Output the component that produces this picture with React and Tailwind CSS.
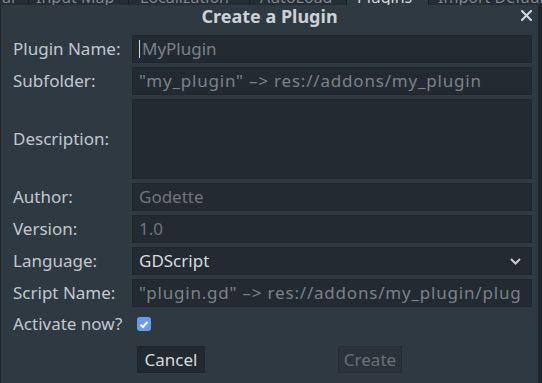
import React from "react";

function Tab({ className, textClass = "text-[#7f878f]", children }) {
  return (
    <div className={"h-[5px] overflow-hidden shrink-0 " + className}>
      <div className={"-mt-[13px] leading-[20px] whitespace-nowrap " + textClass}>{children}</div>
    </div>
  );
}

function Label({ children }) {
  return <div className="text-[17px] leading-[22px] text-[#c3c8cd] whitespace-nowrap">{children}</div>;
}

function Field({ children, className = "" }) {
  return (
    <div
      className={
        "h-[28px] bg-[#232a31] border border-[#20262c] flex items-center pl-[6px] pr-[10px] text-[17px] leading-[22px] whitespace-nowrap " +
        className
      }
    >
      {children}
    </div>
  );
}

export default function App() {
  return (
    <div className="w-[542px] h-[383px] overflow-hidden bg-[#20262c] flex flex-col font-['Noto_Sans',sans-serif]">
      {/* editor tabs behind the dialog */}
      <div className="h-[5px] flex bg-[#252c33] text-[16px]">
        <Tab className="w-[28px] pl-[2px]">al</Tab>
        <div className="w-[1px] h-[5px] bg-[#1b2026] shrink-0" />
        <Tab className="w-[99px] pl-[7px]">Input Map</Tab>
        <div className="w-[1px] h-[5px] bg-[#1b2026] shrink-0" />
        <Tab className="w-[120px] pl-[11px]">Localization</Tab>
        <div className="w-[1px] h-[5px] bg-[#1b2026] shrink-0" />
        <Tab className="w-[96px] pl-[10px]">AutoLoad</Tab>
        <div className="w-[1px] h-[5px] bg-[#1b2026] shrink-0" />
        <Tab className="w-[81px] pl-[10px] bg-[#2f3942]" textClass="text-[#d6dadf]">Plugins</Tab>
        <div className="w-[1px] h-[5px] bg-[#1b2026] shrink-0" />
        <Tab className="flex-1 pl-[9px]">Import Defaults</Tab>
      </div>

      {/* dialog */}
      <div className="ml-[1px] w-[537px] flex-1 bg-[#2f3942] flex flex-col">
        <div className="h-[30px] grid grid-cols-[1fr_auto_1fr]">
          <div />
          <div className="text-[18px] leading-[22px] font-bold text-[#cdd1d6] whitespace-nowrap">Create a Plugin</div>
          <div className="flex justify-end pr-[6px] pt-[5px]">
            <svg width="11" height="11" viewBox="0 0 11 11" className="block">
              <path d="M1 1 L10 10 M10 1 L1 10" stroke="#d5d9dd" strokeWidth="2" strokeLinecap="square" fill="none" />
            </svg>
          </div>
        </div>

        <div className="grid grid-cols-[119px_400px] gap-y-[4px] pl-[12px] items-center">
          <Label>Plugin Name:</Label>
          <Field className="border-[#41eb9b] pl-[1px]">
            <div className="w-[1px] h-[18px] bg-[#d5d9dd] mr-[2px]" />
            <span className="text-[#7b8289]">MyPlugin</span>
          </Field>

          <Label>Subfolder:</Label>
          <Field>
            <span className="text-[#7b8289] tracking-[0.8px]">"my_plugin" –&gt; res://addons/my_plugin</span>
          </Field>

          <Label>Description:</Label>
          <div className="h-[80px] bg-[#232a31] border border-[#20262c]" />

          <Label>Author:</Label>
          <Field>
            <span className="text-[#6f767d]">Godette</span>
          </Field>

          <Label>Version:</Label>
          <Field>
            <span className="text-[#6f767d]">1.0</span>
          </Field>

          <Label>Language:</Label>
          <Field className="justify-between pr-[4px]">
            <span className="text-[#d6dadf]">GDScript</span>
            <svg width="11" height="7" viewBox="0 0 11 7" className="block">
              <path d="M1 1 L5.5 5.5 L10 1" stroke="#c8cdd2" strokeWidth="2" fill="none" />
            </svg>
          </Field>

          <Label>Script Name:</Label>
          <Field>
            <div className="overflow-hidden w-full">
              <span className="text-[#7b8289] tracking-[0.8px]">"plugin.gd" –&gt; res://addons/my_plugin/plugin.gd</span>
            </div>
          </Field>

          <div className="h-[26px] flex items-center">
            <Label>Activate now?</Label>
          </div>
          <div className="h-[26px] flex items-center pl-[5px]">
            <div className="w-[14px] h-[14px] rounded-[3px] bg-[#699ce8] flex items-center justify-center">
              <svg width="10" height="9" viewBox="0 0 10 9" className="block">
                <path d="M1.5 4.8 L4 7 L8.5 1.8" stroke="#ffffff" strokeWidth="2" fill="none" />
              </svg>
            </div>
          </div>
        </div>

        <div className="flex mt-[9px] pl-[136px]">
          <div className="w-[68px] h-[27px] bg-[#22292f] border border-[#1f252b] flex items-center justify-center text-[17px] leading-[22px] text-[#d6dadf]">
            Cancel
          </div>
          <div className="ml-[133px] w-[64px] h-[27px] bg-[#2a333b] border border-[#252c33] flex items-center justify-center text-[17px] leading-[22px] text-[#697178]">
            Create
          </div>
        </div>
      </div>
    </div>
  );
}
